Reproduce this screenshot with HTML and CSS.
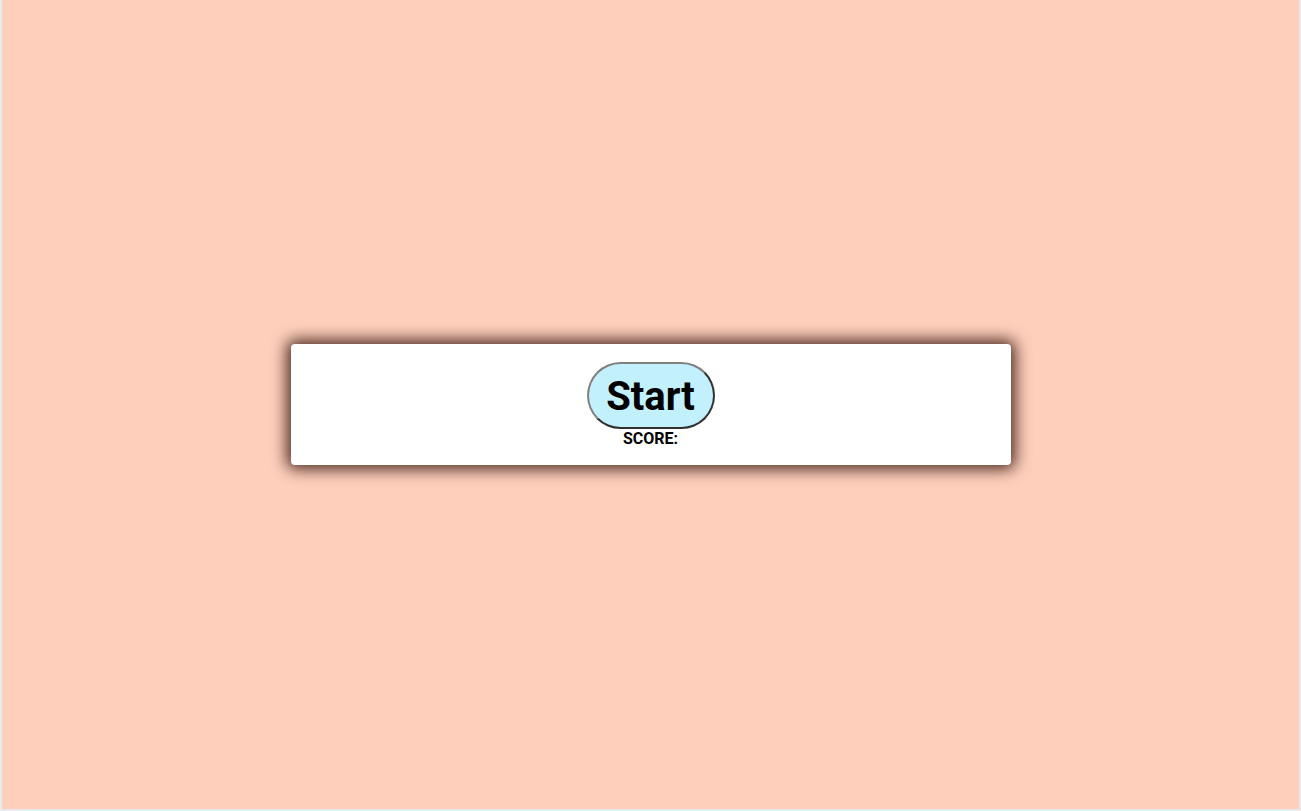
FILE: index.html
```html
<!DOCTYPE html>
<html lang="en">
<head>
<meta charset="utf-8">
<title>Game</title>
<link rel="stylesheet" href="styles.css">
</head>
<body>
<main class="stage">
  <section class="panel">
    <button class="start-btn" type="button">Start</button>
    <div class="score">SCORE:</div>
  </section>
</main>
</body>
</html>
```
FILE: styles.css
```css
html {
  background: #e6e9ee;
  height: 100%;
}
body {
  margin: 0 2px 2px 2px;
  height: calc(100% - 2px);
  background: #fed0bc;
  font-family: Roboto, "Liberation Sans", Arial, sans-serif;
}
.stage {
  height: 100%;
  display: flex;
  align-items: center;
  justify-content: center;
}
.panel {
  width: 720px;
  box-sizing: border-box;
  padding: 18px 0 17px;
  background: #ffffff;
  border-radius: 4px;
  box-shadow: 0 0 16px 4px rgba(40, 8, 0, 0.85);
  display: flex;
  flex-direction: column;
  align-items: center;
}
.start-btn {
  width: 128px;
  height: 67px;
  box-sizing: border-box;
  padding: 2px 0 0;
  border: 2px solid;
  border-color: #808080 #303030 #303030 #808080;
  border-radius: 34px;
  background: #c3f0fd;
  color: #000;
  font-family: Roboto, "Liberation Sans", Arial, sans-serif;
  font-weight: 700;
  font-size: 40px;
  line-height: 1;
}
.score {
  padding-top: 1px;
  font-size: 16px;
  line-height: 18px;
  font-weight: 700;
  color: #000;
}
```
